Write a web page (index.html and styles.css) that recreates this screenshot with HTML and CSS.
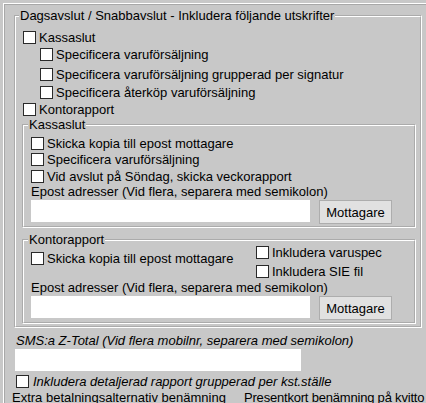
FILE: index.html
```html
<!DOCTYPE html>
<html lang="sv">
<head>
<meta charset="utf-8">
<title>Dagsavslut</title>
<link rel="stylesheet" href="styles.css">
</head>
<body>
<div class="frame">
  <fieldset class="fs outer">
    <legend>Dagsavslut / Snabbavslut - Inkludera följande utskrifter</legend>
    <label class="row top r1"><input type="checkbox"><span>Kassaslut</span></label>
    <label class="row sub r2"><input type="checkbox"><span>Specificera varuförsäljning</span></label>
    <label class="row sub r3"><input type="checkbox"><span>Specificera varuförsäljning grupperad per signatur</span></label>
    <label class="row sub r4"><input type="checkbox"><span>Specificera återköp varuförsäljning</span></label>
    <label class="row top r5"><input type="checkbox"><span>Kontorapport</span></label>

    <fieldset class="fs inner kassa">
      <legend>Kassaslut</legend>
      <label class="row"><input type="checkbox"><span>Skicka kopia till epost mottagare</span></label>
      <label class="row k2"><input type="checkbox"><span>Specificera varuförsäljning</span></label>
      <label class="row k3"><input type="checkbox"><span>Vid avslut på Söndag, skicka veckorapport</span></label>
      <div class="caption">Epost adresser (Vid flera, separera med semikolon)</div>
      <div class="entry">
        <input type="text" class="text">
        <button type="button" class="btn">Mottagare</button>
      </div>
    </fieldset>

    <fieldset class="fs inner kontor">
      <legend>Kontorapport</legend>
      <div class="split">
        <div class="col-left">
          <label class="row lone"><input type="checkbox"><span>Skicka kopia till epost mottagare</span></label>
        </div>
        <div class="col-right">
          <label class="row"><input type="checkbox"><span>Inkludera varuspec</span></label>
          <label class="row c2"><input type="checkbox"><span>Inkludera SIE fil</span></label>
        </div>
      </div>
      <div class="caption">Epost adresser (Vid flera, separera med semikolon)</div>
      <div class="entry">
        <input type="text" class="text">
        <button type="button" class="btn">Mottagare</button>
      </div>
    </fieldset>
  </fieldset>

  <div class="sms">SMS:a Z-Total (Vid flera mobilnr, separera med semikolon)</div>
  <input type="text" class="text sms-input">
  <label class="row detail"><input type="checkbox"><span>Inkludera detaljerad rapport grupperad per kst.ställe</span></label>
  <div class="extra"><span class="extra-a">Extra betalningsalternativ benämning</span><span class="extra-b">Presentkort benämning på kvitto</span></div>
</div>
</body>
</html>
```
FILE: styles.css
```css
* { box-sizing: border-box; }
html, body { margin: 0; padding: 0; }
body {
  width: 426px;
  height: 403px;
  overflow: hidden;
  background: #c8c8c8;
  font: 13px/15px "Liberation Sans", Arial, sans-serif;
  color: #000;
}
.frame {
  margin: 3px 0 0 3px;
  height: 400px;
  border-left: 1px solid #fff;
  border-top: 1px solid #fff;
  box-shadow: inset 1px 1px 0 #a8a8a8;
}
.fs {
  border: 2px groove #fff;
  margin: 0;
  min-width: 0;
}
legend {
  padding: 0 1px;
  margin-left: -3px;
  line-height: 14px;
}
.outer {
  margin: 5px 0 0 10px;
  width: 408px;
  padding: 7px 4px 2px 6px;
}
.row {
  display: flex;
  align-items: center;
  height: 15px;
  white-space: nowrap;
}
.row input[type=checkbox] {
  appearance: none;
  -webkit-appearance: none;
  flex: none;
  width: 13px;
  height: 13px;
  margin: 0 3px 0 0;
  border: 1px solid #2a2a2a;
  background: #fff;
}
.top { padding-left: 1px; }
.sub { padding-left: 18px; }
.r2 { margin-top: 2px; }
.r3 { margin-top: 5px; }
.r4 { margin-top: 3px; }
.r5 { margin-top: 2px; }

.inner { width: 394px; }
.kassa { margin-top: 1px; padding: 4px 6px 2px 7px; }
.kontor { margin-top: 5px; padding: 0 6px 2px 7px; }
.k2 { margin-top: 1px; }
.k3 { margin-top: 2px; }

.caption { height: 15px; white-space: nowrap; }
.entry {
  display: flex;
  align-items: flex-start;
  margin-top: 1px;
}
.text {
  display: block;
  width: 279px;
  height: 22px;
  margin: 0;
  padding: 0 3px;
  border: none;
  background: #fff;
  font: inherit;
  outline: none;
}
.btn {
  width: 73px;
  height: 24px;
  margin: 0 0 0 9px;
  padding: 0;
  border: 1px solid #adadad;
  background: #e1e1e1;
  color: #000;
  font: 13px/15px "Liberation Sans", Arial, sans-serif;
}
.split {
  display: flex;
  margin-top: -2px;
  height: 34px;
}
.col-left { width: 225px; }
.lone { margin-top: 6px; }
.c2 { margin-top: 4px; }
.kontor .caption { margin-top: 1px; }

.sms {
  margin: 5px 0 0 12px;
  font-style: italic;
  height: 15px;
  white-space: nowrap;
}
.sms-input {
  margin: 1px 0 0 11px;
  width: 286px;
}
.detail {
  margin: 3px 0 0 12px;
  font-style: italic;
}
.detail input[type=checkbox] { margin-right: 4px; }
.extra {
  display: flex;
  margin: 1px 0 0 8px;
  white-space: nowrap;
}
.extra-a { width: 232px; flex: none; }
.extra-b { letter-spacing: -0.2px; }
```
